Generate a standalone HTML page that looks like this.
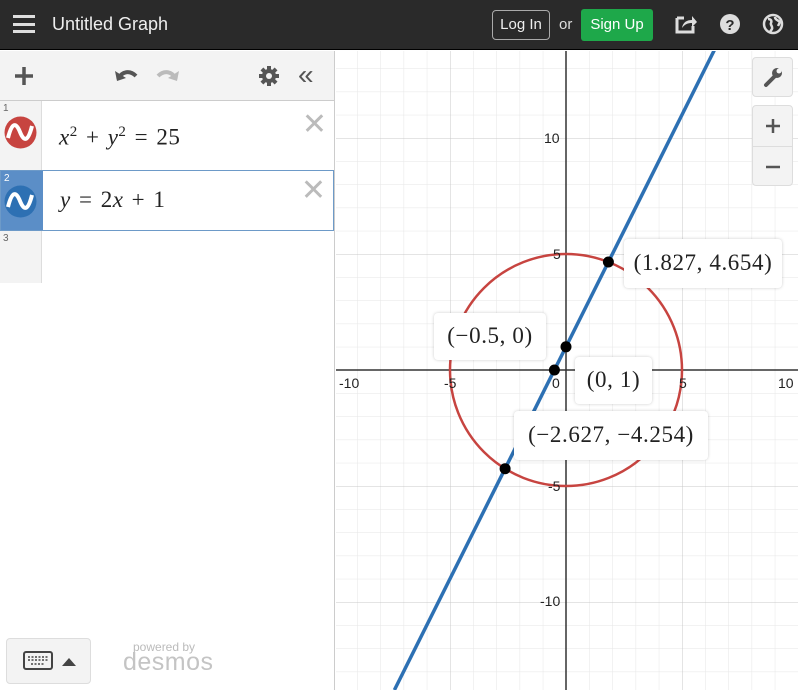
<!DOCTYPE html>
<html><head><meta charset="utf-8"><style>
*{box-sizing:border-box;margin:0;padding:0}
body{width:798px;height:690px;overflow:hidden;font-family:"Liberation Sans",sans-serif;background:#fff;position:relative}
.hdr{position:absolute;left:0;top:0;width:798px;height:50px;background:#2a2a2a;border-bottom:1px solid #000}
.hdr .t{position:absolute;left:52px;top:14px;color:#eee;font-size:18px}
.burger{position:absolute;left:13px;top:15px;width:22px;height:18px}
.burger i{display:block;height:3px;background:#ddd;margin-bottom:4.5px}
.login{position:absolute;left:492px;top:10px;width:58px;height:30px;border:1px solid #aaa;border-radius:4px;color:#eee;font-size:15px;text-align:center;line-height:28px}
.or{position:absolute;left:559px;top:16px;color:#ddd;font-size:15px}
.sign{position:absolute;left:581px;top:9px;width:72px;height:32px;background:#1ea84a;border-radius:3px;color:#fff;font-size:15px;text-align:center;line-height:31px}
.left{position:absolute;left:0;top:51px;width:335px;height:639px;background:#fff;border-right:1px solid #ccc}
.tb{height:50px;background:#f3f3f3;border-bottom:1px solid #ccc;position:relative}
.row{position:relative;height:70px;border-bottom:1px solid #ddd}
.num{position:absolute;left:0;top:0;width:42px;height:100%;background:#f3f3f3;border-right:1px solid #ddd;font-size:10px;color:#666;padding:2px 3px}
.math{position:absolute;left:59px;font-family:"Liberation Serif",serif;font-size:23px;color:#222;letter-spacing:0.5px;word-spacing:2px}
.math i{font-style:italic}
.x{position:absolute;right:7px;top:6px;font-size:30px;color:#bbb;font-weight:300}
.lbl{position:absolute;background:#fff;border-radius:4px;box-shadow:0 0 3px rgba(0,0,0,.2);font-family:"Liberation Serif",serif;font-size:23px;letter-spacing:0.6px;color:#222;text-align:center;white-space:nowrap}
.al{position:absolute;font-size:14px;color:#222}
</style></head><body>
<div class="hdr">
<div class="burger"><i></i><i></i><i></i></div>
<div class="t">Untitled Graph</div>
<div class="login">Log In</div><div class="or">or</div><div class="sign">Sign Up</div>
<svg style="position:absolute;left:674px;top:13px" width="24" height="22" viewBox="0 0 24 22"><path d="M3 5h7M3 5v14h16v-6" stroke="#ddd" stroke-width="3" fill="none"/><path d="M8 15c1-6 5-8 10-8V3l5 6-5 5v-4c-4 0-7 1-10 5z" fill="#ddd"/></svg>
<svg style="position:absolute;left:719px;top:13px" width="22" height="22"><circle cx="11" cy="11" r="10" fill="#ddd"/><text x="11" y="17" text-anchor="middle" font-family="Liberation Sans" font-weight="bold" font-size="15" fill="#2a2a2a">?</text></svg>
<svg style="position:absolute;left:762px;top:13px" width="22" height="22"><circle cx="11" cy="11" r="9" fill="none" stroke="#ddd" stroke-width="2.5"/><path d="M6 6c3 0 4 2 3 4s2 3 1 6l-2 3M13 4c0 3 3 3 5 5l-2 4" stroke="#ddd" stroke-width="2.5" fill="none"/></svg>
</div>
<div class="left">
<div class="tb">
<svg style="position:absolute;left:13px;top:14px" width="22" height="22"><path d="M11 2v18M2 11h18" stroke="#555" stroke-width="3.5"/></svg>
<svg style="position:absolute;left:114px;top:14px" width="26" height="18"><path d="M4 14c4-8 12-9 18-3" stroke="#555" stroke-width="4" fill="none"/><path d="M1 6l2 10 9-3z" fill="#555"/></svg>
<svg style="position:absolute;left:154px;top:14px" width="26" height="18"><path d="M22 14c-4-8-12-9-18-3" stroke="#bbb" stroke-width="4" fill="none"/><path d="M25 6l-2 10-9-3z" fill="#bbb"/></svg>
<svg style="position:absolute;left:258px;top:14px" width="22" height="22" viewBox="0 0 22 22"><g fill="#555"><circle cx="11" cy="11" r="7"/><rect x="9" y="1" width="4" height="20"/><rect x="1" y="9" width="20" height="4"/><rect x="9" y="1" width="4" height="20" transform="rotate(45 11 11)"/><rect x="9" y="1" width="4" height="20" transform="rotate(-45 11 11)"/></g><circle cx="11" cy="11" r="3" fill="#f3f3f3"/></svg>
<div style="position:absolute;left:298px;top:8px;font-size:28px;color:#555">«</div>
</div>
<div class="row"><div class="num">1
<svg style="position:absolute;left:4px;top:15px" width="33" height="33"><circle cx="16.5" cy="16.5" r="16" fill="#c74440"/><path d="M4 22c4-16 8-16 12-6s8 10 12-6" stroke="#fff" stroke-width="4" fill="none"/></svg></div>
<div class="math" style="top:23px"><i>x</i><sup style="font-size:15px">2</sup> + <i>y</i><sup style="font-size:15px">2</sup> = 25</div>
<div class="x">✕</div></div>
<div class="row" style="height:61px;border:1px solid #6d9ac8;margin-top:-1px"><div class="num" style="background:#5b8ec7;color:#fff;border-right:none">2
<svg style="position:absolute;left:3px;top:14px" width="33" height="33"><circle cx="16.5" cy="16.5" r="16" fill="#2d70b3"/><path d="M4 22c4-16 8-16 12-6s8 10 12-6" stroke="#fff" stroke-width="4" fill="none"/></svg></div>
<div class="math" style="top:16px"><i>y</i> = 2<i>x</i> + 1</div>
<div class="x" style="top:2px">✕</div></div>
<div style="position:relative;height:52px"><div class="num" style="height:52px;border-bottom:none">3</div></div>
<div style="position:absolute;left:6px;top:587px;width:85px;height:46px;background:#f3f3f3;border:1px solid #ddd;border-radius:4px">
<svg style="position:absolute;left:16px;top:12px" width="30" height="20"><rect x="1" y="1" width="28" height="17" rx="2" fill="none" stroke="#444" stroke-width="2"/><path d="M5 6h20M5 9h20M8 13h14" stroke="#444" stroke-dasharray="2 1.5" stroke-width="1.5"/></svg>
<div style="position:absolute;left:55px;top:19px;border-left:7px solid transparent;border-right:7px solid transparent;border-bottom:8px solid #444"></div></div>
<div style="position:absolute;left:133px;top:589px;font-size:12px;color:#bbb">powered by</div>
<div style="position:absolute;left:123px;top:597px;font-size:25px;color:#c4c4c4;letter-spacing:0.5px">desmos</div>
</div>
<svg style="position:absolute;left:336px;top:51px" width="462" height="639" viewBox="336 51 462 639">
<defs>
<pattern id="mi" patternUnits="userSpaceOnUse" x="566" y="370" width="23.2" height="23.2"><path d="M0 0V23.2M0 0H23.2" stroke="#e6e6e6" stroke-width="1" fill="none"/></pattern>
<pattern id="ma" patternUnits="userSpaceOnUse" x="566" y="370" width="116" height="116"><path d="M0 0V116M0 0H116" stroke="#c8c8c8" stroke-width="1" fill="none"/></pattern>
</defs>
<rect x="336" y="51" width="462" height="639" fill="url(#mi)"/>
<rect x="336" y="51" width="462" height="639" fill="url(#ma)"/>
<path d="M566 51V690M336 370H798" stroke="#333" stroke-width="1.5"/>
<circle cx="566" cy="370" r="116" fill="none" stroke="#c74440" stroke-width="2.5"/>
<line x1="714.4" y1="50" x2="394.4" y2="690" stroke="#2d70b3" stroke-width="3.5"/>
<g fill="#000"><circle cx="608.4" cy="262" r="5.5"/><circle cx="554.4" cy="370" r="5.5"/><circle cx="566" cy="346.8" r="5.5"/><circle cx="505.1" cy="468.7" r="5.5"/></g>
</svg>
<div class="al" style="left:544px;top:130px">10</div>
<div class="al" style="left:553px;top:246px">5</div>
<div class="al" style="left:339px;top:375px">-10</div>
<div class="al" style="left:444px;top:375px">-5</div>
<div class="al" style="left:552px;top:375px">0</div>
<div class="al" style="left:679px;top:375px">5</div>
<div class="al" style="left:778px;top:375px">10</div>
<div class="al" style="left:548px;top:478px">-5</div>
<div class="al" style="left:540px;top:593px">-10</div>
<div class="lbl" style="left:624px;top:239px;width:158px;height:49px;line-height:47px">(1.827, 4.654)</div>
<div class="lbl" style="left:434px;top:313px;width:112px;height:47px;line-height:45px">(−0.5, 0)</div>
<div class="lbl" style="left:575px;top:357px;width:77px;height:47px;line-height:45px">(0, 1)</div>
<div class="lbl" style="left:514px;top:411px;width:194px;height:49px;line-height:47px">(−2.627, −4.254)</div>
<div style="position:absolute;left:752px;top:57px;width:41px;height:40px;background:#f3f3f3;border:1px solid #ddd;border-radius:4px">
<svg style="position:absolute;left:10px;top:8px" width="20" height="22"><path d="M3 19l9-9" stroke="#555" stroke-width="4" stroke-linecap="round"/><circle cx="14" cy="7" r="5" fill="#555"/><circle cx="16" cy="5" r="2.5" fill="#f3f3f3"/></svg></div>
<div style="position:absolute;left:752px;top:105px;width:41px;height:81px;background:#f3f3f3;border:1px solid #ddd;border-radius:4px">
<svg style="position:absolute;left:12px;top:12px" width="16" height="16"><path d="M8 1v14M1 8h14" stroke="#555" stroke-width="2.5"/></svg>
<div style="position:absolute;left:0;top:40px;width:39px;border-top:1px solid #ddd"></div>
<svg style="position:absolute;left:12px;top:53px" width="16" height="16"><path d="M1 8h14" stroke="#555" stroke-width="2.5"/></svg></div>
</body></html>
